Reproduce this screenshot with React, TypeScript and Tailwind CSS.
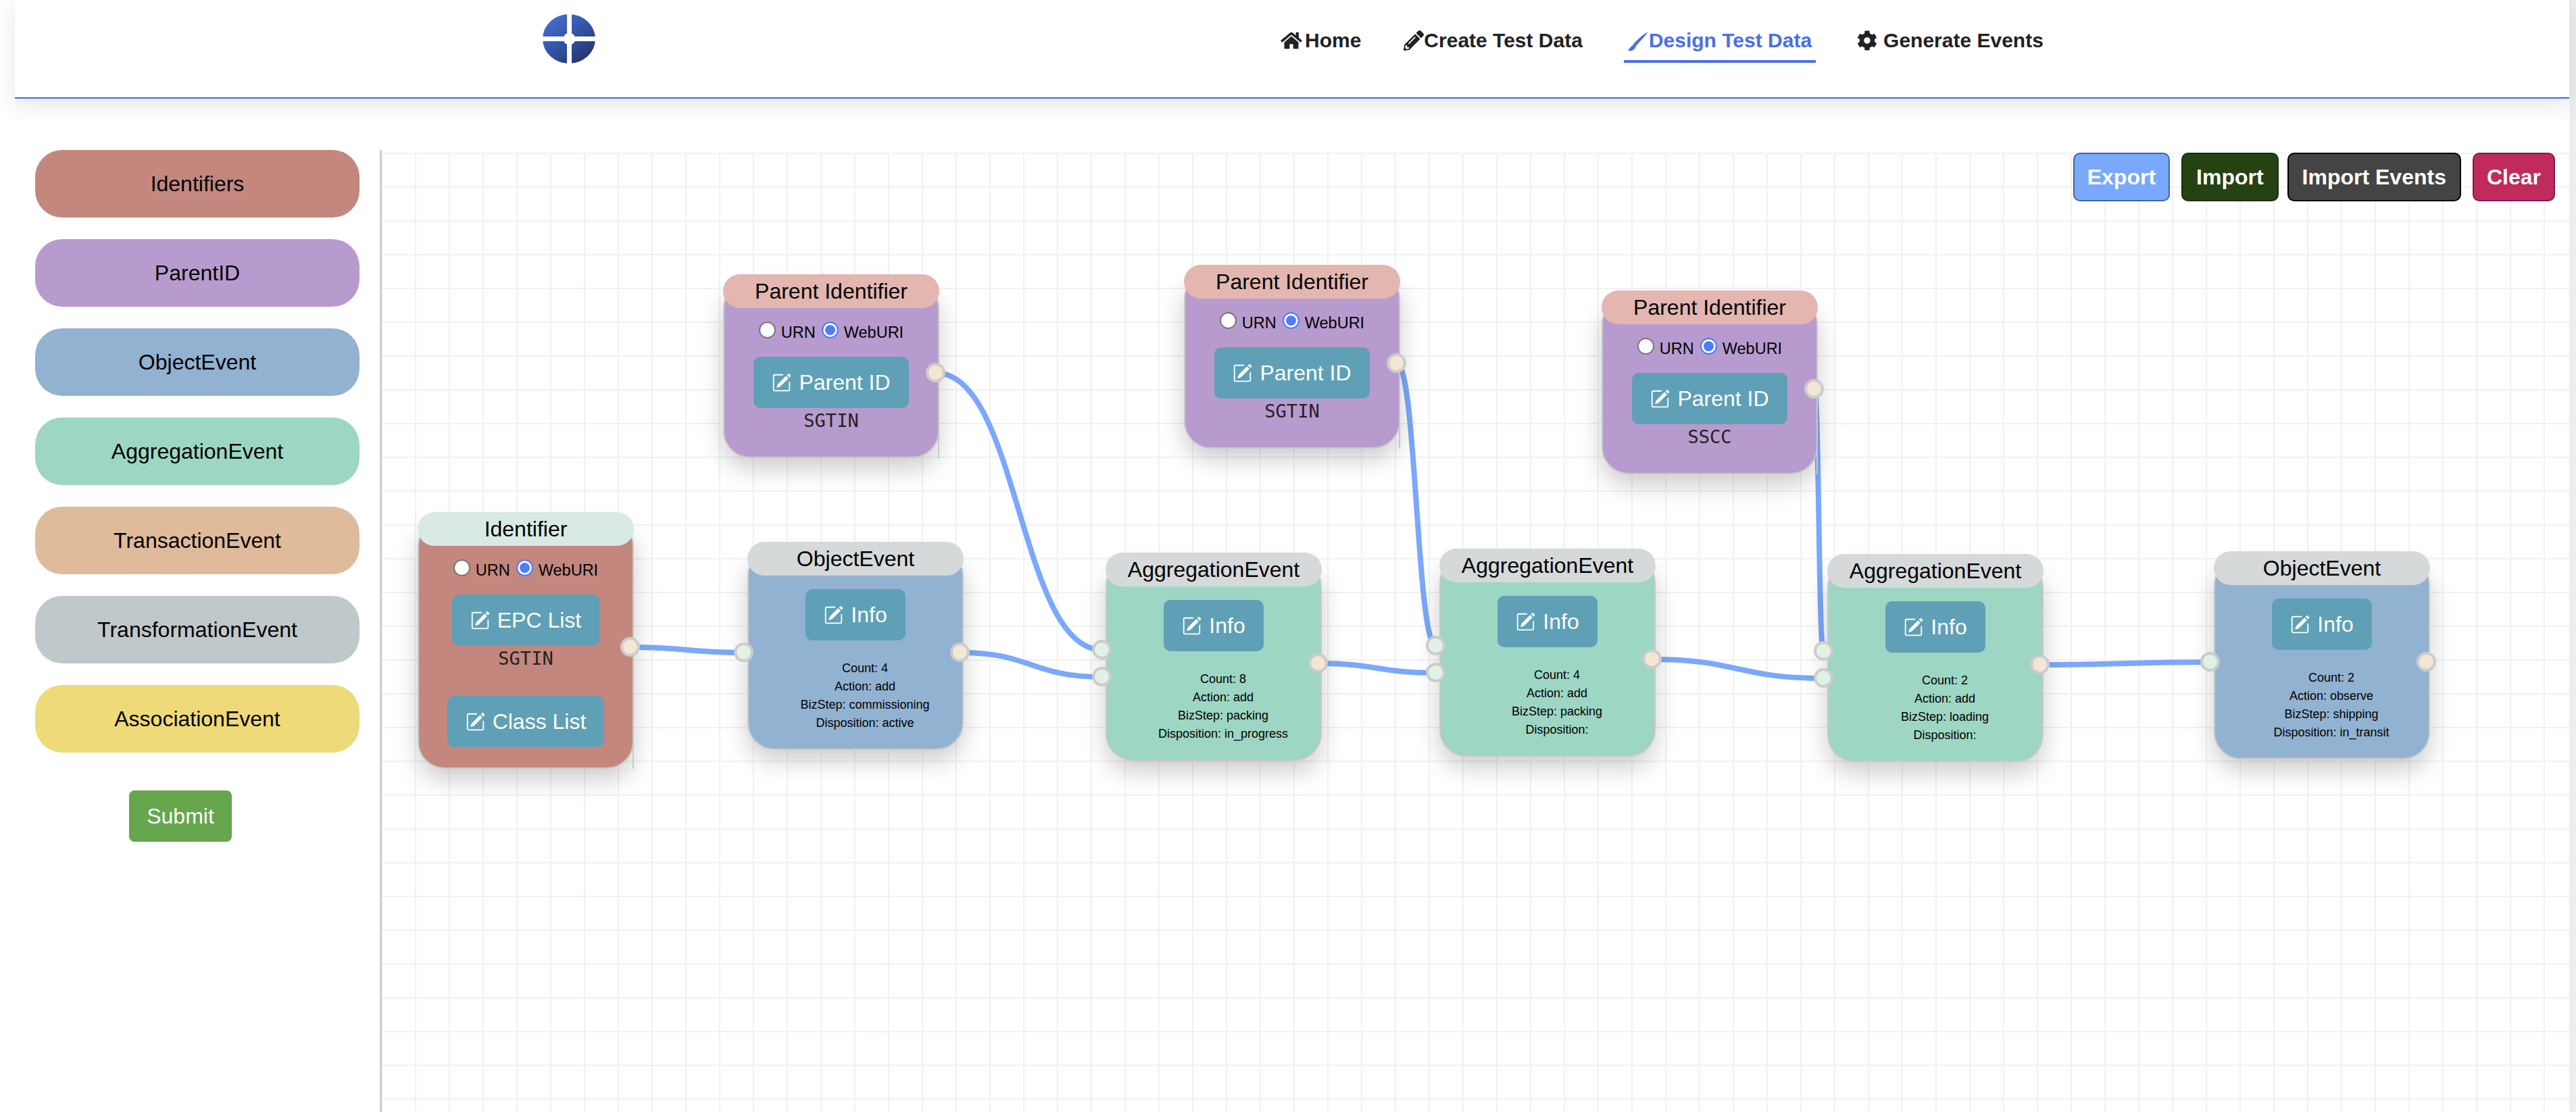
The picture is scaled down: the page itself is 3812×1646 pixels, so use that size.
import { FaHome, FaPencilAlt, FaCog } from "react-icons/fa";
import { BsPencilSquare } from "react-icons/bs";

const PALETTE = [
  { label: "Identifiers", bg: "bg-[#c3877e]" },
  { label: "ParentID", bg: "bg-[#b89bce]" },
  { label: "ObjectEvent", bg: "bg-[#92b2d1]" },
  { label: "AggregationEvent", bg: "bg-[#9dd6c3]" },
  { label: "TransactionEvent", bg: "bg-[#dfbb9b]" },
  { label: "TransformationEvent", bg: "bg-[#bfc8ca]" },
  { label: "AssociationEvent", bg: "bg-[#eeda78]" },
];

// edges in canvas coordinates, source -> target handle centres
const EDGES = [
  [368, 732, 536, 740],
  [820, 326, 1066, 736],
  [856, 740, 1066, 776],
  [1502, 312, 1560, 730],
  [1386, 756, 1560, 770],
  [2120, 350, 2133, 738],
  [1880, 750, 2133, 778],
  [2454, 758, 2706, 754],
];

function edgePath([sx, sy, tx, ty]: number[]) {
  const d = (tx - sx) / 2;
  return `M${sx},${sy} C${sx + d},${sy} ${tx - d},${ty} ${tx},${ty}`;
}

function Logo() {
  return (
    <svg viewBox="0 0 78 73" className="w-[78px] h-[73px]">
      <defs>
        <linearGradient id="logoBlue" x1="0.1" y1="0" x2="0.9" y2="1">
          <stop offset="0" stopColor="#4770d6" />
          <stop offset="0.55" stopColor="#31509f" />
          <stop offset="1" stopColor="#1f3066" />
        </linearGradient>
      </defs>
      <ellipse cx="39" cy="36.5" rx="39" ry="36.5" fill="url(#logoBlue)" />
      <rect x="36" y="0" width="7" height="73" fill="white" />
      <rect x="0" y="33" width="78" height="7" fill="white" />
      <circle cx="39.5" cy="36.5" r="9" fill="white" />
    </svg>
  );
}

function BrushIcon() {
  return (
    <svg viewBox="0 0 30 29" className="w-[30px] h-[29px] shrink-0 mt-[5px]" fill="#4a6fe3">
      <path d="M30 0C22 4 12 13 7 20 3 23 2 26 0 27c1 2 6 2 9-1 2-2 3-4 3-5C18 14 26 6 30 0Z" />
    </svg>
  );
}

function Navbar() {
  return (
    <nav className="ml-[22px] h-[146px] flex items-start bg-white border-b-2 border-[#4169e1] shadow-[0_10px_30px_rgba(0,0,0,0.1)] relative z-10 text-[30px] leading-[36px] font-bold text-[#222222]">
      <div className="ml-[781px] mt-[21px]">
        <Logo />
      </div>
      <a className="ml-[1016px] pt-[42px] flex items-center">
        <FaHome className="w-[32px] h-[28px] -ml-[2px] shrink-0" />
        <span className="ml-[4px]">Home</span>
      </a>
      <a className="ml-[63px] pt-[42px] flex items-center">
        <FaPencilAlt className="w-[30px] h-[30px] shrink-0" />
        <span>Create Test Data</span>
      </a>
      <a className="ml-[61px] h-[93px] px-[6px] pt-[42px] flex items-start border-b-4 border-[#4a6fe3] text-[#4a6fe3]">
        <BrushIcon />
        <span className="ml-[1px]">Design Test Data</span>
      </a>
      <a className="ml-[61px] pt-[42px] flex items-center">
        <FaCog className="w-[30px] h-[30px] shrink-0" />
        <span className="ml-[9px]">Generate Events</span>
      </a>
    </nav>
  );
}

function Sidebar() {
  return (
    <aside className="w-[562px] shrink-0 pl-[52px] flex flex-col gap-[32px]">
      {PALETTE.map((p) => (
        <div
          key={p.label}
          className={`w-[480px] h-[100px] rounded-[40px] flex items-center justify-center text-[32px] text-black ${p.bg}`}
        >
          {p.label}
        </div>
      ))}
      <button className="ml-[139px] mt-[24px] w-[152px] h-[76px] rounded-[8px] bg-[#66a64d] text-white text-[32px]">
        Submit
      </button>
    </aside>
  );
}

function EditButton({ label }: { label: string }) {
  return (
    <button className="h-[76px] px-[27px] rounded-[10px] bg-[#5fa0b6] text-white text-[32px] flex items-center gap-[11px] shrink-0">
      <BsPencilSquare className="w-[29px] h-[29px]" />
      {label}
    </button>
  );
}

function RadioRow() {
  return (
    <div className="h-[40px] flex items-center justify-center text-[23.5px] text-black">
      <input type="radio" readOnly className="appearance-none w-[25px] h-[25px] mb-[10px] rounded-full bg-white border-2 border-[#777777]" />
      <span className="ml-[8px]">URN</span>
      <input type="radio" readOnly className="appearance-none ml-[9px] w-[25px] h-[25px] mb-[10px] rounded-full bg-[#4f7cff] border-2 border-[#4f7cff] shadow-[inset_0_0_0_3px_white]" />
      <span className="ml-[8px]">WebURI</span>
    </div>
  );
}

function Handle({ className }: { className: string }) {
  return <div className={`absolute z-20 w-[29px] h-[29px] rounded-full border-4 border-[#cccccc] ${className}`} />;
}

function Node({
  className,
  title,
  headerBg,
  bodyBg,
  bodyHeight,
  bodyPad,
  children,
}: {
  className: string;
  title: string;
  headerBg: string;
  bodyBg: string;
  bodyHeight: string;
  bodyPad: string;
  children: React.ReactNode;
}) {
  return (
    <div className={`absolute w-[320px] text-black ${className}`}>
      <div className={`relative z-10 h-[50px] rounded-[26px] text-center text-[32px] leading-[50px] ${headerBg}`}>{title}</div>
      <div className={`-mt-[40px] rounded-[40px] border-2 border-[#c9c9c9] shadow-[0_16px_36px_rgba(0,0,0,0.2)] flex flex-col items-center ${bodyBg} ${bodyHeight} ${bodyPad}`}>
        {children}
      </div>
    </div>
  );
}

function ParentNode({ className, kind }: { className: string; kind: string }) {
  return (
    <Node className={className} title="Parent Identifier" headerBg="bg-[#e3b6b0]" bodyBg="bg-[#b89bce]" bodyHeight="h-[262px]" bodyPad="pt-[55px]">
      <RadioRow />
      <div className="mt-[15px]">
        <EditButton label="Parent ID" />
      </div>
      <div className="h-[38px] font-['DejaVu_Sans_Mono',monospace] text-[27px] leading-[38px] text-[#222222]">{kind}</div>
      <Handle className="left-[300px] top-[131px] bg-[#f3e6d5]" />
      {/* stray resize edge that shows on the right of the node */}
      <div className="absolute right-0 top-[122px] h-[150px] w-[2px] bg-[#c9c9c9]" />
    </Node>
  );
}

function EventNode({
  className,
  title,
  bodyBg,
  lines,
  aggregation,
}: {
  className: string;
  title: string;
  bodyBg: string;
  lines: string[];
  aggregation?: boolean;
}) {
  return (
    <Node className={className} title={title} headerBg="bg-[#d5d9da]" bodyBg={bodyBg} bodyHeight="h-[298px]" bodyPad="pt-[58px]">
      <EditButton label="Info" />
      <div className="mt-[28px] pl-[28px] text-[18px] leading-[27px] text-center text-black">
        {lines.map((l) => (
          <div key={l}>{l}</div>
        ))}
      </div>
      {aggregation ? (
        <>
          <Handle className="-left-[20px] top-[129px] bg-[#e0f2e4]" />
          <Handle className="-left-[20px] top-[169px] bg-[#e0f2e4]" />
        </>
      ) : (
        <Handle className="-left-[20px] top-[149px] bg-[#e0f2e4]" />
      )}
      <Handle className="left-[300px] top-[149px] bg-[#f3e6d5]" />
    </Node>
  );
}

function Canvas() {
  return (
    <div className="flex-1 border-l-[3px] border-[#cccccc] pt-[4px]">
      <div className="relative h-[1420px] bg-[linear-gradient(#f1f1f1_2px,transparent_2px),linear-gradient(90deg,#f1f1f1_2px,transparent_2px)] bg-[size:50px_50px] bg-[position:-1px_0px]">
        <svg className="absolute inset-0 w-full h-full" fill="none">
          {EDGES.map((e, i) => (
            <path key={i} d={edgePath(e)} stroke="#7aa8fa" strokeWidth="8" />
          ))}
        </svg>

        <Node className="left-[53px] top-[532px]" title="Identifier" headerBg="bg-[#d9eae5]" bodyBg="bg-[#c3877e]" bodyHeight="h-[370px]" bodyPad="pt-[55px]">
          <RadioRow />
          <div className="mt-[15px]">
            <EditButton label="EPC List" />
          </div>
          <div className="h-[38px] font-['DejaVu_Sans_Mono',monospace] text-[27px] leading-[38px] text-[#222222]">SGTIN</div>
          <div className="mt-[36px]">
            <EditButton label="Class List" />
          </div>
          <Handle className="left-[300px] top-[185px] bg-[#f3e6d5]" />
          <div className="absolute right-0 top-[122px] h-[258px] w-[2px] bg-[#c9c9c9]" />
        </Node>

        <ParentNode className="left-[505px] top-[180px]" kind="SGTIN" />
        <ParentNode className="left-[1187px] top-[166px]" kind="SGTIN" />
        <ParentNode className="left-[1805px] top-[204px]" kind="SSCC" />

        <EventNode
          className="left-[541px] top-[576px]"
          title="ObjectEvent"
          bodyBg="bg-[#92b2d1]"
          lines={["Count: 4", "Action: add", "BizStep: commissioning", "Disposition: active"]}
        />
        <EventNode
          className="left-[1071px] top-[592px]"
          title="AggregationEvent"
          bodyBg="bg-[#9dd6c3]"
          aggregation
          lines={["Count: 8", "Action: add", "BizStep: packing", "Disposition: in_progress"]}
        />
        <EventNode
          className="left-[1565px] top-[586px]"
          title="AggregationEvent"
          bodyBg="bg-[#9dd6c3]"
          aggregation
          lines={["Count: 4", "Action: add", "BizStep: packing", "Disposition:"]}
        />
        <EventNode
          className="left-[2139px] top-[594px]"
          title="AggregationEvent"
          bodyBg="bg-[#9dd6c3]"
          aggregation
          lines={["Count: 2", "Action: add", "BizStep: loading", "Disposition:"]}
        />
        <EventNode
          className="left-[2711px] top-[590px]"
          title="ObjectEvent"
          bodyBg="bg-[#92b2d1]"
          lines={["Count: 2", "Action: observe", "BizStep: shipping", "Disposition: in_transit"]}
        />

        {/* toolbar floats over the canvas */}
        <div className="absolute top-0 right-[21px] z-30 flex text-[32px] font-bold text-white">
          <button className="h-[72px] px-[19px] rounded-[10px] border-2 border-[#3f63a8] bg-[#7aa8fa]">Export</button>
          <button className="ml-[17px] h-[72px] px-[20px] rounded-[10px] border-2 border-[#1a2f0e] bg-[#254213]">Import</button>
          <button className="ml-[13px] h-[72px] px-[20px] rounded-[10px] border-2 border-black bg-[#444444]">Import Events</button>
          <button className="ml-[17px] h-[72px] px-[19px] rounded-[10px] border-2 border-[#821a50] bg-[#c02b5c]">Clear</button>
        </div>
      </div>
    </div>
  );
}

export default function App() {
  return (
    <div className="flex h-screen overflow-hidden bg-white font-['Liberation_Sans',Arial,sans-serif]">
      <div className="w-[3802px] shrink-0">
        <Navbar />
        <div className="flex mt-[76px]">
          <Sidebar />
          <Canvas />
        </div>
      </div>
      <div className="flex-1 bg-[#ededed]" />
    </div>
  );
}
